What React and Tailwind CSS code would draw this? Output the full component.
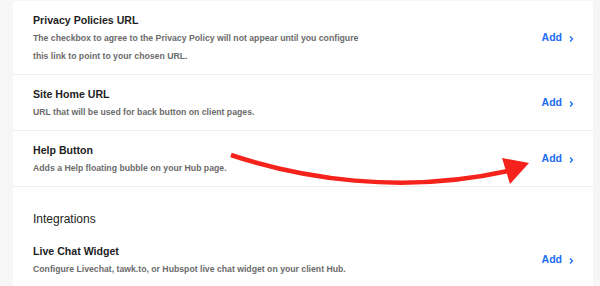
import React from "react"

const rows = [
  {
    title: "Privacy Policies URL",
    desc: "The checkbox to agree to the Privacy Policy will not appear until you configure this link to point to your chosen URL."
  },
  {
    title: "Site Home URL",
    desc: "URL that will be used for back button on client pages."
  },
  {
    title: "Help Button",
    desc: "Adds a Help floating bubble on your Hub page."
  }
]

function SettingRow({ title, desc, last }) {
  return (
    <div
      className={
        "flex items-center pl-[20px] pr-[19px] pt-[10px] pb-[9px] " +
        (last ? "" : "border-b border-[#efefef]")
      }
    >
      <div className="flex-1">
        <div className="text-[10.6px] leading-[18px] font-bold text-[#1e1e1e]">{title}</div>
        <div className="text-[8.7px] leading-[18px] font-bold text-[#6b6b6b] max-w-[335px]">
          {desc}
        </div>
      </div>
      <a className="flex items-center gap-[7px] text-[10.5px] font-bold text-[#1b6cf2]">
        Add
        <svg width="5" height="8" viewBox="0 0 5 8" className="mt-[1px]">
          <path d="M1 1.5l2.5 2.5-2.5 2.5" fill="none" stroke="#1b6cf2" strokeWidth="1.3" />
        </svg>
      </a>
    </div>
  )
}

export default function App() {
  return (
    <div
      className="relative w-[600px] h-[286px] overflow-hidden bg-[#f6f6f6] pt-[1px] pl-[13px] pr-[7px]"
      style={{ fontFamily: "'Liberation Sans', Arial, sans-serif" }}
    >
      <div className="bg-white h-full">
        {rows.map((r, i) => (
          <SettingRow key={r.title} {...r} last={i === rows.length - 1} />
        ))}
        <div className="border-t border-[#efefef] pl-[20px] pt-[23px] pb-[4px] text-[12px] leading-[18px] text-[#222]">
          Integrations
        </div>
        <SettingRow
          title="Live Chat Widget"
          desc="Configure Livechat, tawk.to, or Hubspot live chat widget on your client Hub."
          last
        />
      </div>
      <svg className="absolute left-0 top-0" width="600" height="286" viewBox="0 0 600 286">
        <path
          d="M231 155 C 300 178, 400 195, 508 171"
          fill="none"
          stroke="#f5231b"
          strokeWidth="4.5"
        />
        <path d="M529 163 L502 158 L510 184 Z" fill="#f5231b" />
      </svg>
    </div>
  )
}
